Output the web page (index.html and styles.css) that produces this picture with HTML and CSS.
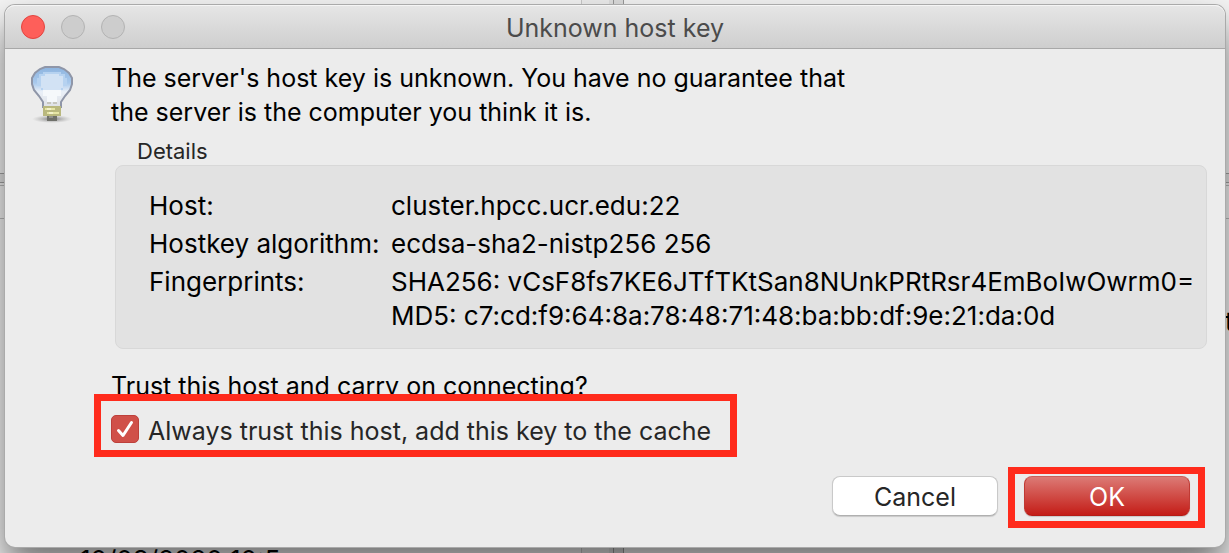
FILE: index.html
```html
<!DOCTYPE html>
<html lang="en">
<head>
<meta charset="utf-8">
<meta name="viewport" content="width=device-width, initial-scale=1">
<title>Unknown host key</title>
<link rel="stylesheet" href="styles.css">
</head>
<body>
<div class="backdrop">
  <div class="pane pane-top"><i class="splitter"></i></div>
  <div class="pane-divider"></div>
  <div class="pane-header"></div>
  <div class="pane pane-bottom"><i class="splitter"></i></div>
  <span class="backdrop-text backdrop-date">10/03/2020 10:5</span>
  <span class="backdrop-text backdrop-type">t</span>
</div>
<main class="dialog" role="dialog" aria-labelledby="title">
  <header class="titlebar">
    <div class="controls">
      <button class="control control-close" type="button" aria-label="Close"></button>
      <button class="control" type="button" aria-label="Minimize" disabled></button>
      <button class="control" type="button" aria-label="Zoom" disabled></button>
    </div>
    <h1 class="title" id="title">Unknown host key</h1>
  </header>
  <form class="content">
    <svg class="bulb" viewBox="0 0 44 60" aria-hidden="true">
      <defs>
        <linearGradient id="glass" x1="0" y1="0" x2="0" y2="1">
          <stop offset="0" stop-color="#8db4df"/>
          <stop offset=".4" stop-color="#a9c9ec"/>
          <stop offset=".62" stop-color="#e9eff7"/>
          <stop offset="1" stop-color="#dfe1e6"/>
        </linearGradient>
        <radialGradient id="shade">
          <stop offset="0" stop-color="#555" stop-opacity=".8"/>
          <stop offset="1" stop-color="#999" stop-opacity="0"/>
        </radialGradient>
      </defs>
      <ellipse cx="23" cy="55" rx="20" ry="4" fill="url(#shade)"/>
      <path fill="url(#glass)" stroke="#8f96a8" stroke-width="2" d="M14 43V38L10 32L5 26L3 20V14L6 9L11 5L16 3H30L35 5L40 9L43 14V20L41 26L36 32L32 38V43Z"/>
      <g shape-rendering="crispEdges">
        <path fill="#b6d2f0" d="M14 8h18v2h4v4h2v8h-4v4H12v-4H8v-8h2v-4h4z"/>
        <path fill="#d2e2f4" d="M16 10h14v2h4v12h-2v4H14v-4h-2V12h4z"/>
        <path fill="#f5f8fb" d="M14 26h18v6h-4v6H18v-6h-4z"/>
        <path fill="#c5c5be" d="M18 38h4v2h-4zm6 0h4v2h-4z"/>
        <path fill="#b9b87e" d="M14 42h18v10H14z"/>
        <path fill="#e6e6a6" d="M16 44h10v2H16zm2 4h12v2H18z"/>
        <path fill="#f3f2cb" d="M18 44h4v2h-4zm2 4h4v2h-4z"/>
        <path fill="#6f706a" d="M18 52h10v5H18z"/>
        <path fill="#92928c" d="M20 52h4v2h-4z"/>
      </g>
    </svg>
    <div class="body">
      <p class="message">The server's host key is unknown. You have no guarantee that<br>the server is the computer you think it is.</p>
      <h2 class="details-title">Details</h2>
      <dl class="details">
        <dt>Host:</dt><dd>cluster.hpcc.ucr.edu:22</dd>
        <dt>Hostkey algorithm:</dt><dd>ecdsa-sha2-nistp256 256</dd>
        <dt>Fingerprints:</dt><dd>SHA256: vCsF8fs7KE6JTfTKtSan8NUnkPRtRsr4EmBoIwOwrm0=<br>MD5: c7:cd:f9:64:8a:78:48:71:48:ba:bb:df:9e:21:da:0d</dd>
      </dl>
      <p class="question">Trust this host and carry on connecting?</p>
      <label class="trust marked" for="trust">
        <span class="tick">
          <input class="tick-box" type="checkbox" id="trust" checked>
          <svg class="tick-mark" viewBox="0 0 28 28" aria-hidden="true"><path d="M7.500 15.500L12 20.500L20.500 7.500" fill="none" stroke="#fff" stroke-width="3" stroke-linecap="round" stroke-linejoin="round"/></svg>
        </span>
        <span>Always trust this host, add this key to the cache</span>
      </label>
      <div class="actions">
        <button class="button" type="button">Cancel</button>
        <span class="marked"><button class="button button-primary" type="submit">OK</button></span>
      </div>
    </div>
  </form>
</main>
</body>
</html>
```
FILE: styles.css
```css
* { box-sizing: border-box; }

body {
  margin: 0;
  min-height: 100vh;
  padding: 5px 4px 6px 5px;
  overflow: hidden;
  background: #f4f4f4;
  color: #000;
  font-family: Inter, "Liberation Sans", sans-serif;
  font-size: 25px;
  line-height: 34px;
}

h1, h2, p, dl, dd { margin: 0; font-weight: 400; }

/* Application window behind the dialog */
.backdrop {
  position: absolute;
  inset: 0;
  display: flex;
  flex-direction: column;
  overflow: hidden;
}
.pane { display: flex; padding-left: 47.3%; }
.pane-top { height: 173px; }
.pane-bottom { flex: 1; }
.splitter {
  width: 43px;
  border-left: 1px solid #c9c9c9;
  border-right: 1px solid #999;
  background: linear-gradient(90deg, #eee 27px, #e0e0e0 27px, #e0e0e0 31px, #999 31px, #999 32px, #ddd 32px);
}
.pane-divider {
  height: 10px;
  border: solid #a3a3a3;
  border-width: 1px 0;
  background: #e4e4e4;
}
.pane-header {
  height: 34px;
  margin-top: 2px;
  border: solid #bbb;
  border-width: 1px 0;
}
.backdrop-text { position: absolute; font-size: 26px; white-space: nowrap; }
.backdrop-date { left: 80px; top: 543px; }
.backdrop-type { left: 1225px; top: 305px; }

.dialog {
  position: relative;
  display: flex;
  flex-direction: column;
  border-radius: 10px;
  background: #ececec;
  box-shadow: 0 0 0 1px #aaa, 0 20px 36px rgba(0, 0, 0, .55);
}

.titlebar {
  display: grid;
  grid-template-columns: 1fr auto 1fr;
  align-items: center;
  height: 44px;
  padding: 0 16px;
  border-bottom: 1px solid #a8a8a8;
  border-radius: 10px 10px 0 0;
  background: linear-gradient(#e6e6e6, #cecece);
  box-shadow: inset 0 1px #f5f5f5;
}
.controls { display: flex; gap: 16px; }
.control {
  width: 24px;
  height: 24px;
  padding: 0;
  border: 1px solid #b3b3b3;
  border-radius: 50%;
  background: #cdcdcd;
}
.control-close { border-color: #e2443f; background: #fe5f5a; }
.title { padding-top: 2px; color: #4b4b4b; font-size: 25px; line-height: 34px; }

.content {
  display: flex;
  gap: 38px;
  padding: 12px 18px 31px 24px;
}
.bulb { flex: none; width: 44px; height: 60px; margin-top: 3px; }
.body { flex: 1; }

.details-title {
  margin-top: 7px;
  padding: 1px 0 0 26px;
  color: #262626;
  font-size: 22px;
  line-height: 28px;
}
.details {
  display: grid;
  grid-template-columns: 242px 1fr;
  row-gap: 4px;
  margin-left: 4px;
  padding: 23px 0 15px 33px;
  border: 1px solid #d8d8d8;
  border-radius: 8px;
  background: #e2e2e2;
  font-size: 26px;
}
.question { margin-top: 20px; }

/* Red frame drawn over a control that needs attention */
.marked { position: relative; }
.marked::after {
  content: "";
  position: absolute;
  border: 7px solid #ff2b1c;
  pointer-events: none;
}

.trust {
  display: flex;
  align-items: flex-start;
  gap: 9px;
  width: fit-content;
  margin-top: 9px;
  color: #262626;
  line-height: 38px;
}
.trust::after { inset: -18px -26px -7px -17px; }
.tick { display: grid; margin-top: 3px; }
.tick-box, .tick-mark { grid-area: 1 / 1; width: 28px; height: 28px; margin: 0; }
.tick-box {
  appearance: none;
  border: 1px solid #bd403b;
  border-radius: 5px;
  background: #d05049;
}
.tick-mark { pointer-events: none; }

.actions {
  display: flex;
  justify-content: flex-end;
  gap: 26px;
  margin-top: 26px;
  padding-right: 17px;
}
.actions .marked { display: flex; }
.actions .marked::after { inset: -9px -15px -12px -16px; }
.button {
  width: 166px;
  height: 40px;
  padding: 2px 0 0;
  border: 1px solid #c9c9c9;
  border-bottom-color: #b0b0b0;
  border-radius: 8px;
  background: #fff;
  box-shadow: 0 1px 1px rgba(0, 0, 0, .15);
  color: #262626;
  font: inherit;
}
.button-primary {
  border-color: #c9605b #c03a34 #b51c16;
  background: linear-gradient(#dc7a75, #c41d17);
  color: #fff;
}
```
